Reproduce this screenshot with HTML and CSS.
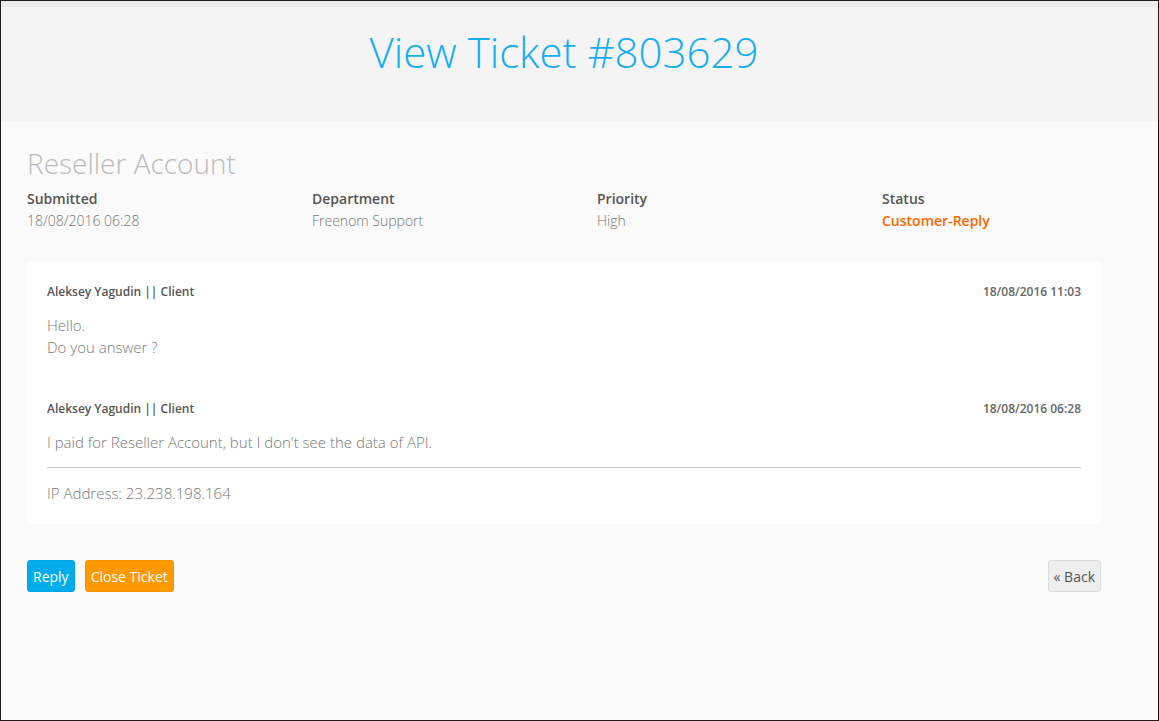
FILE: index.html
```html
<!DOCTYPE html>
<html>
<head>
    <title>View Ticket #803629</title>
    <link rel="stylesheet" href="styles.css">
</head>
<body>
    <div class="frame">
        <div class="topbar"></div>
        <div class="page-header">
            <h1>View Ticket #803629</h1>
        </div>

        <div class="main">
            <h2 class="subject">Reseller Account</h2>

            <div class="ticket-info">
                <div>
                    <div class="info-label">Submitted</div>
                    <div class="info-value">18/08/2016 06:28</div>
                </div>
                <div>
                    <div class="info-label">Department</div>
                    <div class="info-value">Freenom Support</div>
                </div>
                <div>
                    <div class="info-label">Priority</div>
                    <div class="info-value">High</div>
                </div>
                <div>
                    <div class="info-label">Status</div>
                    <div class="info-value status">Customer-Reply</div>
                </div>
            </div>

            <div class="replies">
                <div class="reply">
                    <div class="reply-head">
                        <span>Aleksey Yagudin || Client</span>
                        <span class="reply-date">18/08/2016 11:03</span>
                    </div>
                    <div class="reply-body">
                        Hello.<br>
                        Do you answer ?
                    </div>
                </div>

                <div class="reply">
                    <div class="reply-head">
                        <span>Aleksey Yagudin || Client</span>
                        <span class="reply-date">18/08/2016 06:28</span>
                    </div>
                    <div class="reply-body">
                        I paid for Reseller Account, but I don't see the data of API.
                    </div>
                    <hr>
                    <div class="ip-address">IP Address: 23.238.198.164</div>
                </div>
            </div>

            <div class="actions">
                <div class="actions-left">
                    <button class="btn btn-reply">Reply</button>
                    <button class="btn btn-close">Close Ticket</button>
                </div>
                <button class="btn btn-back">&laquo; Back</button>
            </div>
        </div>
    </div>
</body>
</html>
```

FILE: styles.css
```css
html, body {
    margin: 0;
    padding: 0;
}

body {
    font-family: "Open Sans", Arial, sans-serif;
    font-size: 14px;
    color: #888;
}

.frame {
    height: 721px;
    box-sizing: border-box;
    border: 1px solid #1c1c1c;
    background-color: #fafafa;
}

.topbar {
    height: 6px;
    background-color: #ececec;
}

.page-header {
    height: 114px;
    box-sizing: border-box;
    padding-top: 17px;
    background-color: #f4f4f4;
}

.page-header h1 {
    width: 1074px;
    margin: 0 0 0 26px;
    text-align: center;
    font-size: 42px;
    font-weight: 300;
    line-height: 56px;
    color: #14aeef;
}

.main {
    padding: 24px 26px 0;
}

.subject {
    margin: 0;
    font-size: 28px;
    font-weight: 300;
    line-height: 36px;
    color: #bbb;
}

.ticket-info {
    display: grid;
    grid-template-columns: repeat(4, 285px);
    margin-top: 7px;
    line-height: 22px;
}

.info-label {
    font-weight: 600;
    color: #555;
}

.info-value {
    font-weight: 300;
    color: #777;
}

.info-value.status {
    font-weight: 600;
    color: #ff6600;
}

.replies {
    width: 1074px;
    box-sizing: border-box;
    margin-top: 30px;
    padding: 21px 20px 20px;
    background-color: #fff;
}

.reply + .reply {
    margin-top: 42px;
}

.reply-head {
    display: flex;
    justify-content: space-between;
    font-size: 12px;
    font-weight: 600;
    line-height: 18px;
    color: #555;
}

.reply-date {
    color: #666;
}

.reply-body {
    margin-top: 13px;
    font-size: 15px;
    font-weight: 300;
    line-height: 22px;
    color: #777;
}

.replies hr {
    margin: 14px 0 14px;
    border: none;
    border-top: 1px solid #ccc;
}

.ip-address {
    font-size: 15px;
    font-weight: 300;
    line-height: 22px;
    color: #777;
}

.actions {
    width: 1074px;
    margin-top: 36px;
    display: flex;
    justify-content: space-between;
}

.actions-left {
    display: flex;
    gap: 10px;
}

.btn {
    height: 32px;
    padding: 0 5px;
    font-family: "Open Sans", Arial, sans-serif;
    font-size: 14px;
    border-radius: 3px;
    border: 1px solid transparent;
    color: #fff;
    cursor: pointer;
}

.btn-reply {
    background-color: #00acec;
    border-color: #00a5e2;
}

.btn-close {
    background-color: #ff9900;
    border-color: #f59300;
}

.btn-back {
    background-color: #eee;
    border-color: #ddd;
    color: #555;
}
```
